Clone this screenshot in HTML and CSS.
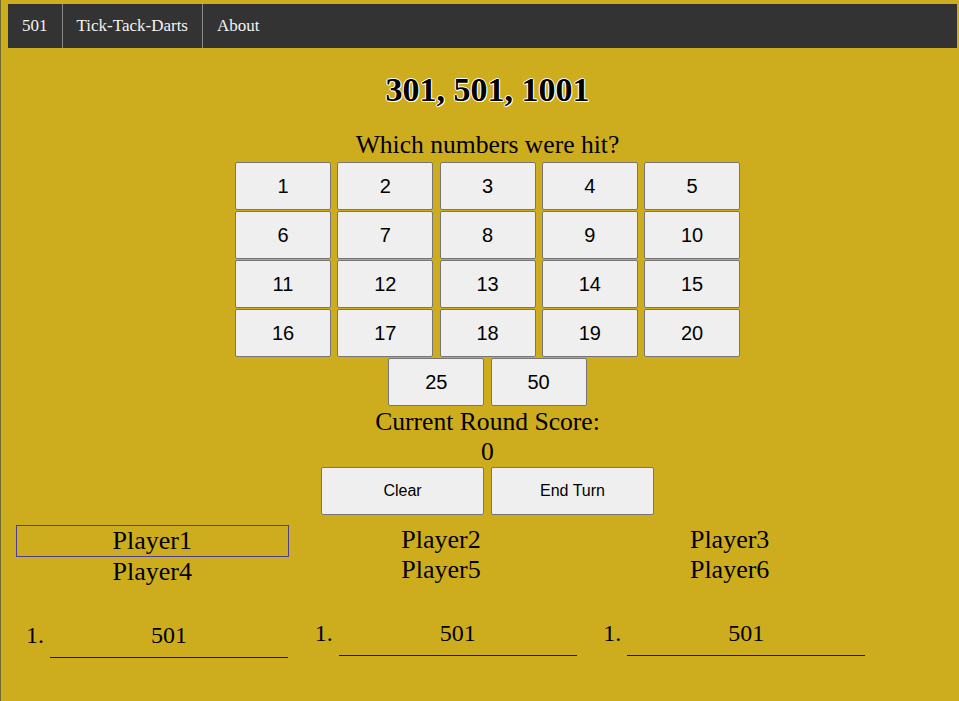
FILE: index.html
```html
<!DOCTYPE html>
<html>
<head>
<meta charset="utf-8">
<link rel="stylesheet" href="styles.css">
</head>
<body>
<nav class="topnav">
  <a class="nav-item">501</a>
  <a class="nav-item">Tick-Tack-Darts</a>
  <a class="nav-item">About</a>
</nav>
<section class="board">
  <h1 class="title">301, 501, 1001</h1>
  <div class="prompt">Which numbers were hit?</div>
  <div class="numbers">
    <button class="num">1</button><button class="num">2</button><button class="num">3</button><button class="num">4</button><button class="num">5</button>
    <button class="num">6</button><button class="num">7</button><button class="num">8</button><button class="num">9</button><button class="num">10</button>
    <button class="num">11</button><button class="num">12</button><button class="num">13</button><button class="num">14</button><button class="num">15</button>
    <button class="num">16</button><button class="num">17</button><button class="num">18</button><button class="num">19</button><button class="num">20</button>
  </div>
  <div class="bulls">
    <button class="num">25</button><button class="num">50</button>
  </div>
  <div class="score-label">Current Round Score:</div>
  <div class="score-value">0</div>
  <div class="actions">
    <button class="action">Clear</button><button class="action">End Turn</button>
  </div>
</section>
<section class="players">
  <div class="col">
    <div class="pname active">Player1</div>
    <div class="pname">Player4</div>
    <ol class="scores"><li>501</li></ol>
  </div>
  <div class="col">
    <div class="pname">Player2</div>
    <div class="pname">Player5</div>
    <ol class="scores"><li>501</li></ol>
  </div>
  <div class="col">
    <div class="pname">Player3</div>
    <div class="pname">Player6</div>
    <ol class="scores"><li>501</li></ol>
  </div>
</section>
</body>
</html>
```

FILE: styles.css
```css
html {
  background: #cdad1d;
  border-left: 1px solid #6e6a2c;
  min-height: 100%;
}
body {
  margin: 4px 2px 0 7px;
  font-family: "Liberation Serif", "Times New Roman", serif;
  color: #000;
}
.topnav {
  display: flex;
  background: #333333;
  height: 44px;
}
.nav-item {
  display: block;
  color: #f4f4f4;
  font-size: 17px;
  line-height: 20px;
  padding: 12px 14px;
  border-right: 1px solid #8a8a8a;
}
.nav-item:last-child {
  border-right: none;
}
.board {
  padding-left: 10px;
  display: flex;
  flex-direction: column;
  align-items: center;
}
.title {
  margin: 22px 0 0;
  font-size: 34px;
  line-height: 39px;
  font-weight: bold;
  text-shadow: -1px 0 #fff, 1px 0 #fff, 0 -1px #fff, 0 1px #fff, 1px 1px #fff;
}
.prompt {
  margin-top: 21px;
  font-size: 25.6px;
  line-height: 30px;
}
.numbers {
  margin-top: 2px;
  display: grid;
  grid-template-columns: repeat(5, 96px);
  column-gap: 6.25px;
  row-gap: 1px;
}
.bulls {
  margin-top: 1px;
  display: flex;
  gap: 6.25px;
}
.num, .action {
  height: 48px;
  background: #efefef;
  border: 1px solid #767676;
  border-radius: 2px;
  font-family: "Liberation Sans", Arial, sans-serif;
  color: #000;
  padding: 0;
}
.num {
  width: 96px;
  font-size: 20px;
}
.action {
  width: 163px;
  font-size: 16px;
}
.score-label {
  margin-top: 1px;
  font-size: 25.6px;
  line-height: 30px;
}
.score-value {
  font-size: 25.6px;
  line-height: 30px;
}
.actions {
  display: flex;
  gap: 7px;
}
.players {
  margin-top: 10px;
  display: grid;
  grid-template-columns: repeat(3, 288.67px);
}
.col {
  padding: 0 8px;
}
.pname {
  text-align: center;
  font-size: 26px;
  line-height: 30px;
}
.pname.active {
  border: 1px solid #4b3c94;
}
.scores {
  margin: 26px 0 0;
  padding-left: 34px;
  font-size: 24px;
}
.scores li {
  width: 238px;
  text-align: center;
  line-height: 28px;
  padding: 8px 0;
  border-bottom: 1px solid #1a1a1a;
}
```
